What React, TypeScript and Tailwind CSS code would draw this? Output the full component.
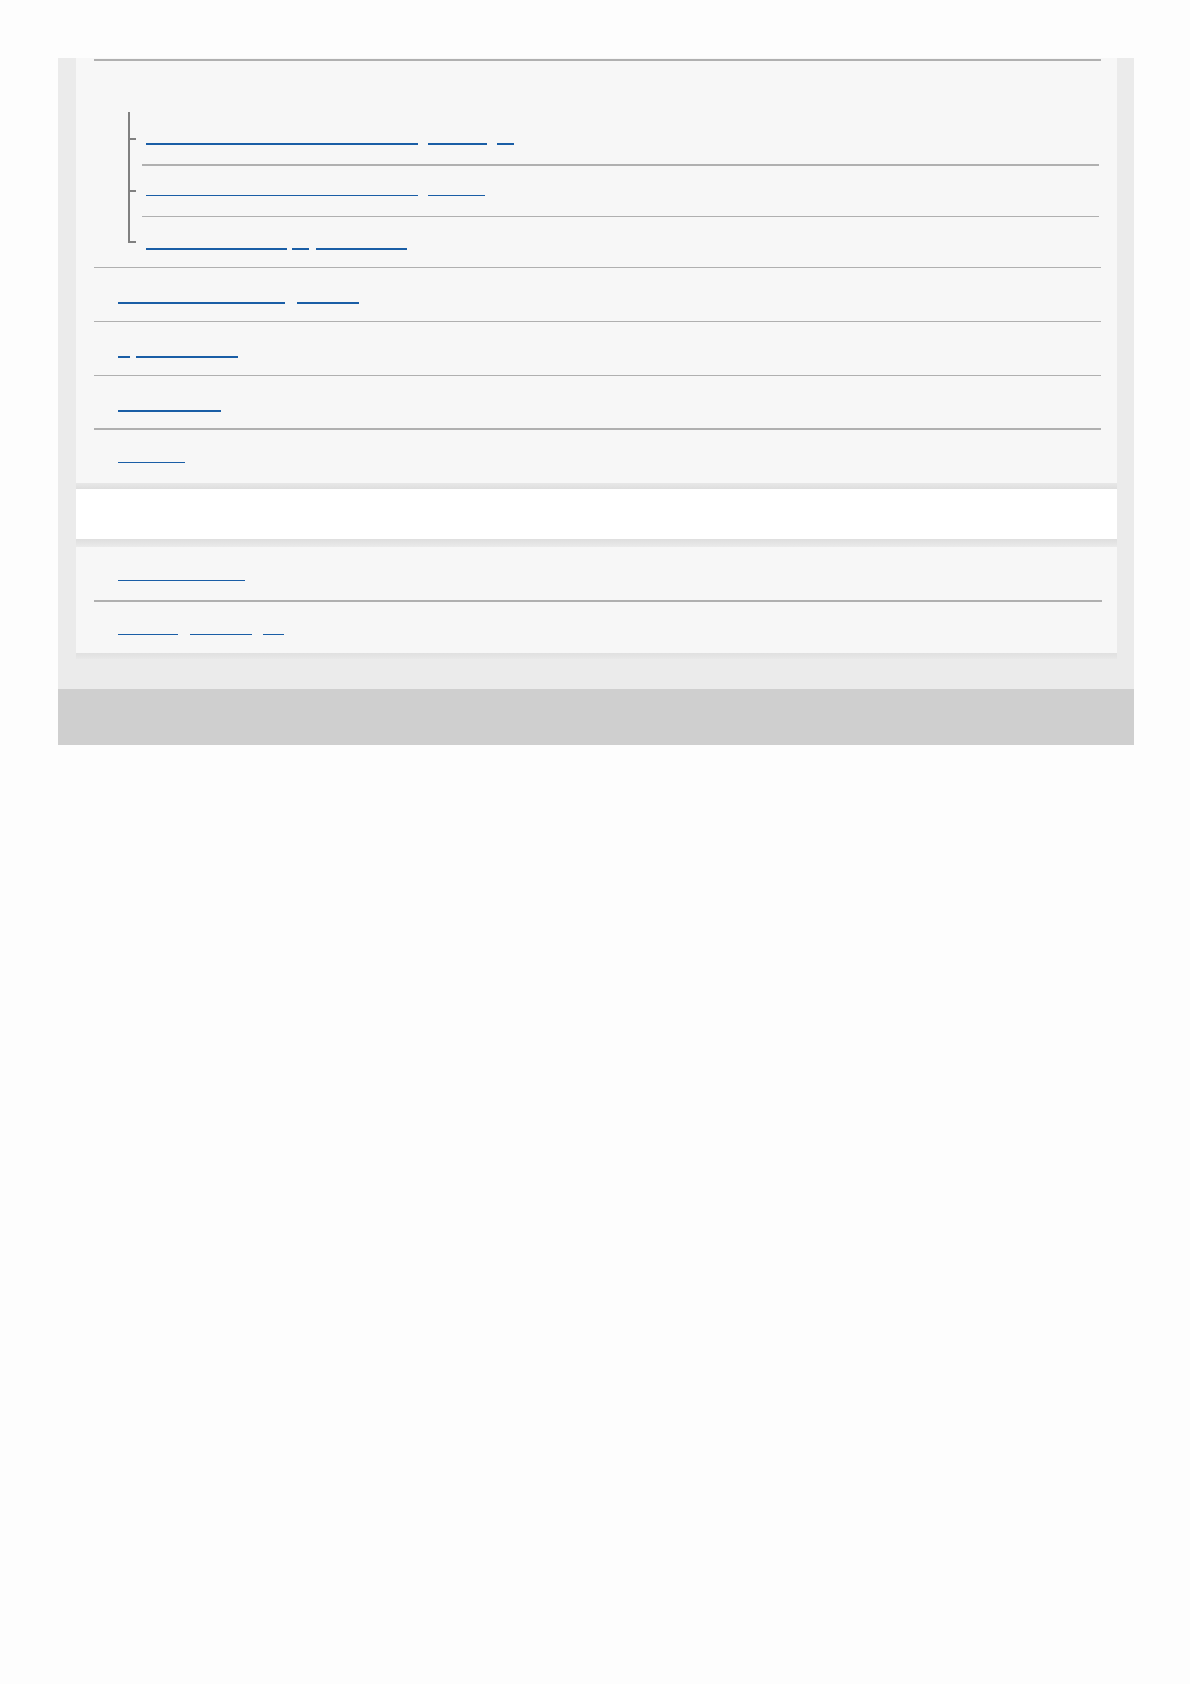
import React from "react";

// Link whose glyphs are not drawn; only the underline shows
function Link({ text, width, thin }: { text: string; width: number; thin?: boolean }) {
  return (
    <a
      href="#"
      style={{ width }}
      className={`inline-block whitespace-nowrap text-transparent text-[10px] leading-[12px] ${
        thin ? "border-b" : "border-b-2"
      } border-[#1a5ea6]`}
    >
      {text}
    </a>
  );
}

function LinkRow({ parts, thin }: { parts: { text: string; w: number; gap?: number }[]; thin?: boolean }) {
  return (
    <div className="flex">
      {parts.map((p, i) => (
        <span key={i} style={{ marginLeft: p.gap ?? 0 }} className="flex">
          <Link text={p.text} width={p.w} thin={thin} />
        </span>
      ))}
    </div>
  );
}

const subItems = [
  {
    parts: [
      { text: "Settings for connection", w: 272 },
      { text: "device", w: 59, gap: 10 },
      { text: "1", w: 17, gap: 10 },
    ],
    thin: false,
    row: "h-[54px] pt-[19px] border-b-2",
    tick: "top-[26px]",
  },
  {
    parts: [
      { text: "Settings for connection", w: 272 },
      { text: "device", w: 57, gap: 10 },
    ],
    thin: true,
    row: "h-[51px] pt-[17px] border-b",
    tick: "top-[24px]",
  },
  {
    parts: [
      { text: "Connection mode", w: 141 },
      { text: "of", w: 17, gap: 5 },
      { text: "computer", w: 91, gap: 7 },
    ],
    thin: false,
    row: "h-[50px] pt-[19px]",
    tick: "top-[24px]",
  },
];

const mainItems = [
  { parts: [{ text: "Network settings", w: 167 }, { text: "menu", w: 62, gap: 12 }], row: "h-[54px] pt-[22px] border-b", thin: false },
  { parts: [{ text: "A", w: 12 }, { text: "Application", w: 102, gap: 6 }], row: "h-[54px] pt-[22px] border-b", thin: false },
  { parts: [{ text: "Bluetooth", w: 103 }], row: "h-[54px] pt-[22px] border-b-2", thin: false },
  { parts: [{ text: "Other", w: 67 }], row: "h-[53px] pt-[20px]", thin: true },
];

export default function App() {
  return (
    <div className="min-h-screen bg-[#fdfdfd] pt-[58px]" style={{ fontFamily: '"Noto Sans", "Noto Sans CJK JP", sans-serif' }}>
      <div className="ml-[58px] w-[1076px]">
        <div className="bg-[#ebebeb] pl-[18px] pr-[17px]">
          {/* first panel */}
          <div className="bg-[#f7f7f7] pl-[18px] pr-[16px]">
            <div className="h-[1px]" />
            <div className="h-[2px] bg-[#b0b0b0]" />

            {/* sub list */}
            <div className="ml-[34px] mt-[51px]">
              {subItems.map((item, i) => {
                const last = i === subItems.length - 1;
                return (
                  <div key={i} className="flex">
                    <div className="relative w-[14px] shrink-0">
                      <div className={`absolute left-0 top-0 w-[2px] bg-[#808080] ${last ? "h-[26px]" : "h-full"}`} />
                      <div className={`absolute left-0 ${item.tick} w-[8px] h-[2px] bg-[#808080]`} />
                    </div>
                    <div className={`flex-1 mr-[2px] pl-[4px] border-[#b0b0b0] ${item.row}`}>
                      <LinkRow parts={item.parts} thin={item.thin} />
                    </div>
                  </div>
                );
              })}
            </div>

            {/* main list */}
            <div className="border-t border-[#b0b0b0]">
              {mainItems.map((item, i) => (
                <div key={i} className={`${item.row} border-[#b0b0b0] pl-[24px]`}>
                  <LinkRow parts={item.parts} thin={item.thin} />
                </div>
              ))}
            </div>
          </div>

          {/* empty white panel */}
          <div className="h-[6px] bg-gradient-to-b from-[#e8e8e8] to-[#dedede]" />
          <div className="h-[50px] bg-white" />
          <div className="h-[8px] bg-gradient-to-b from-[#dedede] to-[#ebebeb]" />

          {/* last panel */}
          <div className="bg-[#f7f7f7] pl-[18px] pr-[15px]">
            <div className="h-[55px] pt-[21px] pl-[24px] border-b-2 border-[#b0b0b0]">
              <LinkRow parts={[{ text: "Specifications", w: 127 }]} thin />
            </div>
            <div className="h-[51px] pt-[20px] pl-[24px]">
              <LinkRow
                parts={[
                  { text: "Notes", w: 60 },
                  { text: "on use", w: 62, gap: 12 },
                  { text: "of", w: 21, gap: 11 },
                ]}
                thin
              />
            </div>
          </div>
          <div className="h-[6px] bg-gradient-to-b from-[#e0e0e0] to-[#e8e8e8]" />
          <div className="h-[30px]" />
        </div>
        <div className="h-[56px] bg-[#cfcfcf]" />
      </div>
    </div>
  );
}
